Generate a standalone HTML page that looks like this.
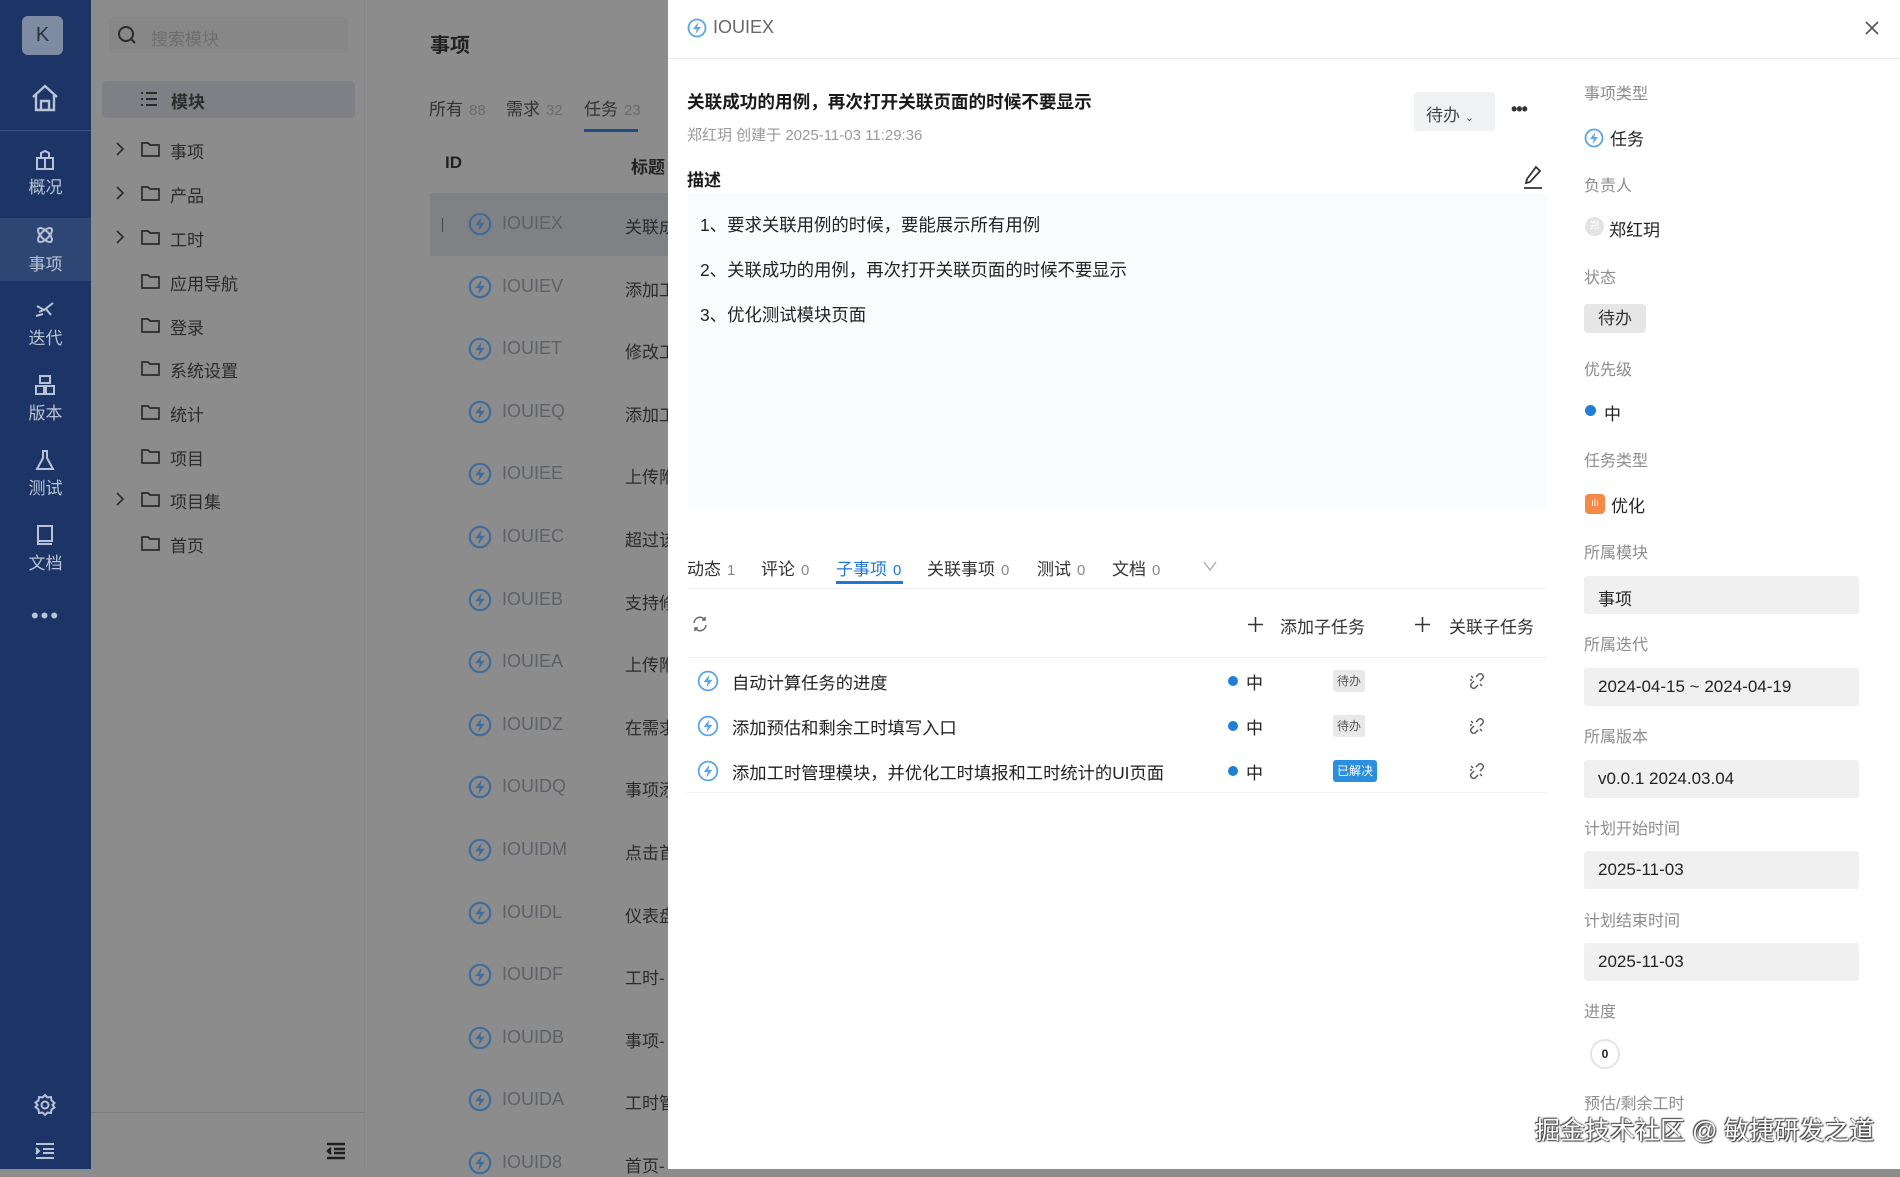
<!DOCTYPE html>
<html><head><meta charset="utf-8">
<style>
*{margin:0;padding:0;box-sizing:border-box}
body{width:1900px;height:1169px;overflow:hidden;position:relative;font-family:"Liberation Sans","Noto Sans CJK SC",sans-serif;background:#8c8c8c;color:#222}
.a{position:absolute;white-space:nowrap}
.nav{left:0;top:0;width:91px;height:1169px;background:#1c3566}
.nl{color:#b9c3d6;font-size:17px;width:91px;text-align:center}
.tree{font-size:17px;color:#2b2b2b}
.lid{font-size:18px;color:#5e6166}
.lt{font-size:17px;color:#2b2b2b}
.drawer{left:668px;top:0;width:1232px;height:1169px;background:#fff}
.lab{font-size:16px;color:#8d8d8d}
.val{font-size:17px;color:#222}
.box{background:#f0f0f0;border-radius:3px;width:275px;height:38px;font-size:17px;color:#222;padding:9px 14px}
.tab{font-size:17px;color:#333}
.tab small{font-size:15px;color:#888;margin-left:6px}
</style></head><body>

<div class="a nav"></div>
<div class="a" style="left:22px;top:16px;width:41px;height:39px;border-radius:6px;background:#7f8ba3;color:#2a2f3b;font-size:20px;text-align:center;line-height:39px">K</div>
<svg class="a" style="left:30px;top:83px" width="30" height="30" viewBox="0 0 30 30" fill="none" stroke="#b9c3d6" stroke-width="2.4"><path d="M3 14 L15 3 L27 14 M6 12 V27 H24 V12 M11 27 V18 H19 V27"/></svg>
<div class="a" style="left:0;top:130px;width:91px;height:1px;background:#3a5280"></div>
<svg class="a" style="left:34px;top:149px" width="22" height="22" viewBox="0 0 22 22" fill="none" stroke="#b9c3d6" stroke-width="2"><rect x="3" y="9" width="16" height="11"/><path d="M11 9 V20 M7 9 L7 4 L11 2 L15 4 L15 9"/></svg>
<div class="a nl" style="top:173px">概况</div>
<div class="a" style="left:0;top:218px;width:91px;height:63px;background:#2e4674"></div>
<svg class="a" style="left:34px;top:224px" width="22" height="22" viewBox="0 0 22 22" fill="none" stroke="#b9c3d6" stroke-width="2"><ellipse cx="11" cy="11" rx="9" ry="4" transform="rotate(45 11 11)"/><ellipse cx="11" cy="11" rx="9" ry="4" transform="rotate(-45 11 11)"/></svg>
<div class="a nl" style="top:250px">事项</div>
<svg class="a" style="left:34px;top:300px" width="22" height="20" viewBox="0 0 22 20" fill="none" stroke="#b9c3d6" stroke-width="2"><path d="M3 6 L10 10 L19 3 M5 12 L12 9 L17 15 M2 16 L9 14"/></svg>
<div class="a nl" style="top:324px">迭代</div>
<svg class="a" style="left:34px;top:374px" width="22" height="22" viewBox="0 0 22 22" fill="none" stroke="#b9c3d6" stroke-width="2"><rect x="6" y="2" width="10" height="7"/><rect x="2" y="12" width="8" height="8"/><rect x="12" y="12" width="8" height="8"/></svg>
<div class="a nl" style="top:399px">版本</div>
<svg class="a" style="left:34px;top:449px" width="22" height="22" viewBox="0 0 22 22" fill="none" stroke="#b9c3d6" stroke-width="2"><path d="M8 2 H14 M9 2 V9 L3 20 H19 L13 9 V2"/></svg>
<div class="a nl" style="top:474px">测试</div>
<svg class="a" style="left:34px;top:524px" width="22" height="22" viewBox="0 0 22 22" fill="none" stroke="#b9c3d6" stroke-width="2"><rect x="4" y="2" width="14" height="15"/><path d="M4 17 V20 H18"/></svg>
<div class="a nl" style="top:549px">文档</div>
<div class="a nl" style="top:603px;font-size:22px;letter-spacing:2px">•••</div>
<svg class="a" style="left:33px;top:1093px" width="24" height="24" viewBox="0 0 24 24" fill="none" stroke="#b9c3d6" stroke-width="2"><circle cx="12" cy="12" r="3.5"/><path d="M12 2 L14.5 4.5 L18 4 L18.5 7.5 L21.5 10 L19.5 12 L21.5 14.5 L18.5 16.5 L18 20 L14.5 19.5 L12 22 L9.5 19.5 L6 20 L5.5 16.5 L2.5 14 L4.5 12 L2.5 9.5 L5.5 7.5 L6 4 L9.5 4.5 Z"/></svg>
<svg class="a" style="left:35px;top:1142px" width="20" height="18" viewBox="0 0 20 18" fill="none" stroke="#b9c3d6" stroke-width="2"><path d="M1 2 H19 M8 7 H19 M8 11 H19 M1 16 H19"/><path d="M1 6 L4 9 L1 12" fill="#b9c3d6"/></svg>

<div class="a" style="left:109px;top:17px;width:239px;height:36px;background:#878787;border-radius:4px"></div>
<svg class="a" style="left:117px;top:25px" width="20" height="20" viewBox="0 0 20 20" fill="none" stroke="#2b2b2b" stroke-width="2"><circle cx="9" cy="9" r="7"/><path d="M14 14 L18 18"/></svg>
<div class="a" style="left:151px;top:25px;font-size:17px;color:#6e6e6e">搜索模块</div>
<div class="a" style="left:102px;top:81px;width:253px;height:37px;background:#7f8086;border-radius:5px"></div>
<svg class="a" style="left:140px;top:91px" width="18" height="16" viewBox="0 0 18 16" fill="none" stroke="#2b2b2b" stroke-width="2"><path d="M1 2 H3 M6 2 H17 M1 8 H3 M6 8 H17 M1 14 H3 M6 14 H17"/></svg>
<div class="a tree" style="left:171px;top:88px;font-weight:bold">模块</div>

<div id="tree"></div>

<div class="a" style="left:91px;top:1112px;width:273px;height:1px;background:#7d7d7d"></div>
<svg class="a" style="left:326px;top:1142px" width="20" height="18" viewBox="0 0 20 18" fill="none" stroke="#1f1f1f" stroke-width="2.4"><path d="M1 2 H19 M8 7 H19 M8 11 H19 M1 16 H19"/><path d="M5 6 L2 9 L5 12" fill="#1f1f1f"/></svg>
<div class="a" style="left:364px;top:0;width:1px;height:1169px;background:#858585"></div>

<div class="a" style="left:430px;top:29px;font-size:20px;font-weight:bold;color:#222">事项</div>
<div class="a tab" style="left:429px;top:95px;color:#333">所有<small style="color:#6a6a6a">88</small></div>
<div class="a tab" style="left:506px;top:95px;color:#333">需求<small style="color:#6a6a6a">32</small></div>
<div class="a tab" style="left:584px;top:95px;color:#333">任务<small style="color:#6a6a6a">23</small></div>
<div class="a" style="left:584px;top:129px;width:54px;height:3px;background:#1e4c86"></div>
<div class="a" style="left:445px;top:153px;font-size:17px;font-weight:bold;color:#222">ID</div>
<div class="a" style="left:631px;top:153px;font-size:17px;font-weight:bold;color:#222">标题</div>
<div class="a" style="left:430px;top:193px;width:238px;height:63px;background:#808185"></div>
<div id="list"></div>

<div class="a drawer"></div>
<div class="a" style="left:668px;top:58px;width:1232px;height:1px;background:#ebebeb"></div>
<svg class="a" style="left:687px;top:18px" width="20" height="20" viewBox="0 0 20 20"><circle cx="10" cy="10" r="8.5" fill="none" stroke="#5ba4e6" stroke-width="1.8"/><path d="M11.5 4 L6 11 H9.8 L8.5 16 L14 9 H10.2 Z" fill="#5ba4e6"/></svg>
<div class="a" style="left:713px;top:17px;font-size:18px;color:#666">IOUIEX</div>
<svg class="a" style="left:1864px;top:20px" width="16" height="16" viewBox="0 0 16 16" stroke="#555" stroke-width="1.6"><path d="M2 2 L14 14 M14 2 L2 14"/></svg>

<div class="a" style="left:687px;top:89px;font-size:17.6px;font-weight:bold;color:#1a1a1a">关联成功的用例，再次打开关联页面的时候不要显示</div>
<div class="a" style="left:687px;top:124px;font-size:15px;color:#999">郑红玥 创建于 2025-11-03 11:29:36</div>
<div class="a" style="left:1414px;top:92px;width:81px;height:39px;background:#f0f1f2;border-radius:4px;font-size:17px;color:#444;padding:9px 0 0 12px">待办 <span style="font-size:11px">⌄</span></div>
<div class="a" style="left:1511px;top:99px;font-size:18px;font-weight:bold;color:#333;letter-spacing:-1px">•••</div>
<div class="a" style="left:687px;top:166px;font-size:17px;font-weight:bold;color:#1a1a1a">描述</div>
<svg class="a" style="left:1522px;top:165px" width="22" height="24" viewBox="0 0 22 24" fill="none" stroke="#333" stroke-width="1.8"><path d="M14 2 L18 6 L8 17 L4 18 L5 14 Z"/><path d="M2 23 H20"/></svg>
<div class="a" style="left:687px;top:194px;width:859px;height:315px;background:#fafbfc"></div>
<div class="a" style="left:700px;top:212px;font-size:17.4px;color:#222">1、要求关联用例的时候，要能展示所有用例</div>
<div class="a" style="left:700px;top:257px;font-size:17.4px;color:#222">2、关联成功的用例，再次打开关联页面的时候不要显示</div>
<div class="a" style="left:700px;top:302px;font-size:17.4px;color:#222">3、优化测试模块页面</div>

<div class="a tab" style="left:687px;top:555px">动态<small>1</small></div>
<div class="a tab" style="left:761px;top:555px">评论<small>0</small></div>
<div class="a tab" style="left:836px;top:555px;color:#1f78d1">子事项<small style="color:#1f78d1">0</small></div>
<div class="a tab" style="left:927px;top:555px">关联事项<small>0</small></div>
<div class="a tab" style="left:1037px;top:555px">测试<small>0</small></div>
<div class="a tab" style="left:1112px;top:555px">文档<small>0</small></div>
<svg class="a" style="left:1203px;top:561px" width="14" height="10" viewBox="0 0 14 10" fill="none" stroke="#aaa" stroke-width="1.3"><path d="M1 1 L7 9 L13 1"/></svg>
<div class="a" style="left:836px;top:581px;width:67px;height:3px;background:#1f78d1"></div>
<div class="a" style="left:687px;top:588px;width:859px;height:1px;background:#f0f0f0"></div>

<svg class="a" style="left:691px;top:615px" width="18" height="18" viewBox="0 0 18 18" fill="none" stroke="#666" stroke-width="1.5"><path d="M3 8 A6 6 0 0 1 14 5 M15 10 A6 6 0 0 1 4 13"/><path d="M14 2 V5 H11 M4 16 V13 H7"/></svg>
<svg class="a" style="left:1248px;top:617px" width="15" height="15" viewBox="0 0 15 15" stroke="#333" stroke-width="1.5"><path d="M7.5 0 V15 M0 7.5 H15"/></svg>
<div class="a" style="left:1280px;top:613px;font-size:17px;color:#333">添加子任务</div>
<svg class="a" style="left:1415px;top:617px" width="15" height="15" viewBox="0 0 15 15" stroke="#333" stroke-width="1.5"><path d="M7.5 0 V15 M0 7.5 H15"/></svg>
<div class="a" style="left:1449px;top:613px;font-size:17px;color:#333">关联子任务</div>
<div class="a" style="left:687px;top:657px;width:859px;height:1px;background:#efefef"></div>
<div id="sub"></div>
<div class="a" style="left:687px;top:792px;width:859px;height:1px;background:#efefef"></div>

<div class="a lab" style="left:1584px;top:80px">事项类型</div>
<svg class="a" style="left:1584px;top:128px" width="20" height="20" viewBox="0 0 20 20"><circle cx="10" cy="10" r="8.5" fill="none" stroke="#5ba4e6" stroke-width="1.8"/><path d="M11.5 4 L6 11 H9.8 L8.5 16 L14 9 H10.2 Z" fill="#5ba4e6"/></svg>
<div class="a val" style="left:1610px;top:125px">任务</div>
<div class="a lab" style="left:1584px;top:172px">负责人</div>
<div class="a" style="left:1585px;top:217px;width:19px;height:19px;border-radius:50%;background:#e3e3e3;color:#fff;font-size:10px;text-align:center;line-height:19px">郑</div>
<div class="a val" style="left:1609px;top:216px">郑红玥</div>
<div class="a lab" style="left:1584px;top:264px">状态</div>
<div class="a" style="left:1584px;top:304px;width:62px;height:29px;background:#e6e6e6;border-radius:4px;font-size:17px;color:#333;text-align:center;line-height:29px">待办</div>
<div class="a lab" style="left:1584px;top:356px">优先级</div>
<div class="a" style="left:1585px;top:405px;width:11px;height:11px;border-radius:50%;background:#1f7fd6"></div>
<div class="a val" style="left:1604px;top:400px">中</div>
<div class="a lab" style="left:1584px;top:447px">任务类型</div>
<div class="a" style="left:1585px;top:494px;width:20px;height:20px;border-radius:4px;background:#f5894a;color:#fff;font-size:10px;text-align:center;line-height:20px">ılı</div>
<div class="a val" style="left:1611px;top:492px">优化</div>
<div class="a lab" style="left:1584px;top:539px">所属模块</div>
<div class="a box" style="left:1584px;top:576px">事项</div>
<div class="a lab" style="left:1584px;top:631px">所属迭代</div>
<div class="a box" style="left:1584px;top:668px">2024-04-15 ~ 2024-04-19</div>
<div class="a lab" style="left:1584px;top:723px">所属版本</div>
<div class="a box" style="left:1584px;top:760px">v0.0.1 2024.03.04</div>
<div class="a lab" style="left:1584px;top:815px">计划开始时间</div>
<div class="a box" style="left:1584px;top:851px">2025-11-03</div>
<div class="a lab" style="left:1584px;top:907px">计划结束时间</div>
<div class="a box" style="left:1584px;top:943px">2025-11-03</div>
<div class="a lab" style="left:1584px;top:998px">进度</div>
<div class="a" style="left:1590px;top:1039px;width:30px;height:30px;border-radius:50%;border:2px solid #e4e4e4;font-size:12px;font-weight:bold;text-align:center;line-height:26px;color:#222">0</div>
<div class="a lab" style="left:1584px;top:1090px">预估/剩余工时</div>
<div class="a" style="left:1535px;top:1111px;font-size:25px;color:#fff;text-shadow:0 0 2px #444,1px 1px 1px #444,-1px -1px 1px #444">掘金技术社区 @ 敏捷研发之道</div>

<script>
var t=[["事项",1],["产品",1],["工时",1],["应用导航",0],["登录",0],["系统设置",0],["统计",0],["项目",0],["项目集",1],["首页",0]];
var ys=[149,193,237,281,325,368,412,456,499,543],h="";
t.forEach(function(e,i){var y=ys[i];
if(e[1])h+='<svg class="a" style="left:114px;top:'+(y-7)+'px" width="12" height="14" viewBox="0 0 12 14" fill="none" stroke="#2b2b2b" stroke-width="1.6"><path d="M3 1 L9 7 L3 13"/></svg>';
h+='<svg class="a" style="left:141px;top:'+(y-8)+'px" width="19" height="16" viewBox="0 0 19 16" fill="none" stroke="#2b2b2b" stroke-width="1.7"><path d="M1 2 H7 L9 4 H18 V15 H1 Z"/></svg>';
h+='<div class="a tree" style="left:170px;top:'+(y-11)+'px">'+e[0]+'</div>';});
document.getElementById("tree").innerHTML=h;
var ids=["IOUIEX","IOUIEV","IOUIET","IOUIEQ","IOUIEE","IOUIEC","IOUIEB","IOUIEA","IOUIDZ","IOUIDQ","IOUIDM","IOUIDL","IOUIDF","IOUIDB","IOUIDA","IOUID8"];
var tt=["关联成","添加工","修改工","添加工","上传附","超过该","支持修","上传附","在需求","事项添","点击首","仪表盘","工时-","事项-","工时管","首页-"];
h="";ids.forEach(function(d,i){var y=Math.round(224+i*62.6);
h+='<svg class="a" style="left:468px;top:'+(y-12)+'px" width="24" height="24" viewBox="0 0 20 20"><circle cx="10" cy="10" r="8.5" fill="none" stroke="#3f6c9c" stroke-width="1.8"/><path d="M11.5 4 L6 11 H9.8 L8.5 16 L14 9 H10.2 Z" fill="#3f6c9c"/></svg>';
h+='<div class="a lid" style="left:502px;top:'+(y-11)+'px">'+d+'</div>';
h+='<div class="a lt" style="left:625px;top:'+(y-11)+'px;width:43px;overflow:hidden">'+tt[i]+'</div>';});
h+='<div class="a" style="left:442px;top:218px;width:8px;height:14px;border-left:1px solid #444;font-size:0"></div>';
document.getElementById("list").innerHTML=h;
var s=[["自动计算任务的进度","待办"],["添加预估和剩余工时填写入口","待办"],["添加工时管理模块，并优化工时填报和工时统计的UI页面","已解决"]];
h="";s.forEach(function(e,i){var y=681+i*45;
h+='<svg class="a" style="left:697px;top:'+(y-11)+'px" width="22" height="22" viewBox="0 0 20 20"><circle cx="10" cy="10" r="8.5" fill="none" stroke="#5ba4e6" stroke-width="1.6"/><path d="M11.5 4 L6 11 H9.8 L8.5 16 L14 9 H10.2 Z" fill="#5ba4e6"/></svg>';
h+='<div class="a" style="left:732px;top:'+(y-12)+'px;font-size:17.3px;color:#222">'+e[0]+'</div>';
h+='<div class="a" style="left:1228px;top:'+(y-5)+'px;width:10px;height:10px;border-radius:50%;background:#1f7fd6"></div>';
h+='<div class="a" style="left:1246px;top:'+(y-12)+'px;font-size:17px;color:#222">中</div>';
var b=e[1]=="已解决";
h+='<div class="a" style="left:1333px;top:'+(y-11)+'px;height:22px;padding:0 4px;border-radius:3px;font-size:12px;line-height:22px;background:'+(b?'#2a8fe0':'#e8e8e8')+';color:'+(b?'#fff':'#555')+'">'+e[1]+'</div>';
h+='<svg class="a" style="left:1468px;top:'+(y-10)+'px" width="18" height="20" viewBox="0 0 18 20" fill="none" stroke="#555" stroke-width="1.4"><path d="M8 6 L11 3 A3 3 0 0 1 15 7 L12 10 M10 14 L7 17 A3 3 0 0 1 3 13 L6 10 M3 5 L5 7 M2 9 H4 M14 15 L12 13"/></svg>';});
document.getElementById("sub").innerHTML=h;
</script>
</body></html>
